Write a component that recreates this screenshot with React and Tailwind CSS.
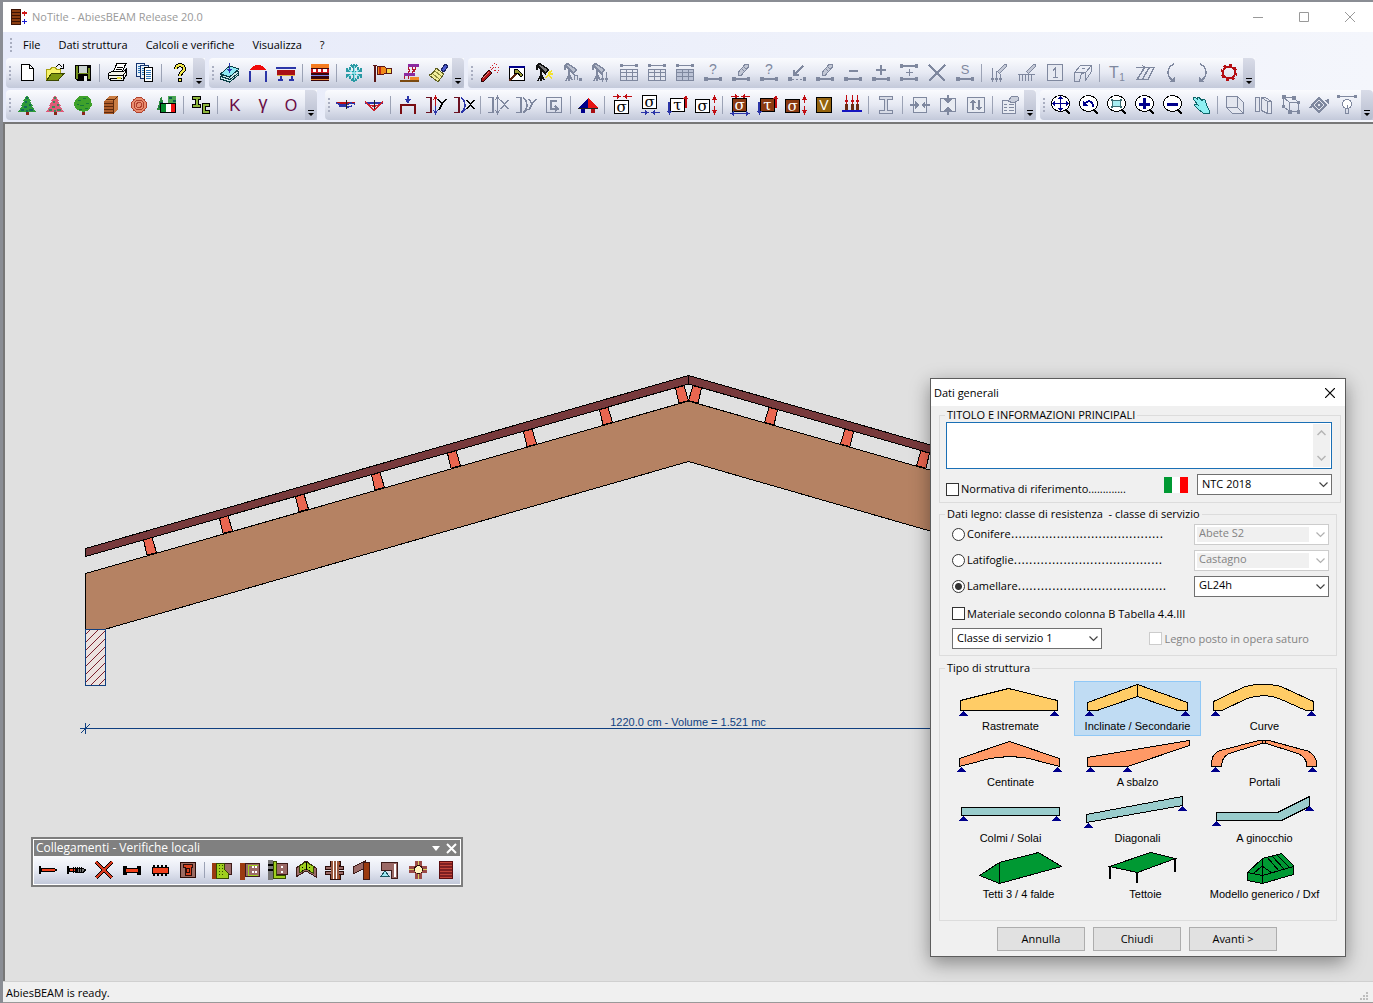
import React from "react";

const G = "#7f889f";
const NAVY = "#00008b";
const BLUE = "#2b35a8";
const RED = "#c00d12";
const UI = "font-['Open_Sans','Noto_Sans',sans-serif]";

const P = ({ d, f = "none", s = "none", w = 1 }) => <path d={d} fill={f} stroke={s} strokeWidth={w} />;
const T = ({ x = 11, y = 16, z = 16, c = G, b = 400, font = "Liberation Sans, sans-serif", children }) => (
  <text x={x} y={y} fontSize={z} fill={c} fontWeight={b} fontFamily={font} textAnchor="middle">{children}</text>
);

const NodeLine = () => (
  <>
    <P d="M2 17h18" s={G} w={2} />
    <P d="M2 15h4v4h-4zM17 15h3v4h-3z" f={G} />
  </>
);
const Pencil = () => (
  <>
    <P d="M8.500 13v-3l7-8h3v3l-7 8z" f="#c3c8d6" s={G} />
    <P d="M12 7l3 3M14 5l3 3" s={G} />
  </>
);
const Spot = ({ c, body }) => (
  <>
    <P d="M3.500 3.500l2-2 9 6-3 4z" f={body} s={c} w={1.500} />
    <P d="M7 8v5M7 12l-3 7M7 12v7M7 12l3 6M3 3v5" s={c} w={1.500} />
  </>
);
const Grid = ({ fill }) => (
  <>
    <P d="M3 3.500h16" s={G} />
    <P d="M2 2h3v3H2zM17 2h3v3h-3z" f={G} />
    <P d="M2.500 7.500h17v11h-17zM2.500 10.500h17M2.500 14.500h17M8.500 7.500v11M14.500 7.500v11" f={fill} s={G} />
  </>
);
const Tree = ({ a, b }) => (
  <>
    <P d="M10 17h3v4h-3z" f="#8a2418" />
    <P d="M11 1l4 6h-1l3 5h-1l4 6H2l4-6H5l3-5H7z" f={a} />
    <P d="M11 3v2M9 8h2M13 11h2M8 13h3M5 16h3M13 16h4M10 17h2" s={b} w={1.500} />
  </>
);
const Sigma = ({ ch, x, y, box = "#fff", ink = "#000" }) => (
  <>
    <rect x={x + 0.5} y={y + 0.5} width="14" height="13" fill={box} stroke="#000" />
    <T x={x + 7.5} y={y + 12} z={15} c={ink} font="DejaVu Serif, serif">{ch}</T>
  </>
);
const InArrows = ({ y, c }) => (
  <g transform={`translate(0 ${y})`}>
    <P d="M2 2.500h5M15 2.500h6" s={c} />
    <P d="M6 0v5l4-2.500zM16 0v5l-4-2.500z" f={c} />
  </g>
);
const OutArrows = ({ y, c }) => (
  <g transform={`translate(0 ${y})`}>
    <P d="M4 2.500h14" s={c} />
    <P d="M5 0v5L1 2.500zM17 0v5l4-2.500z" f={c} />
  </g>
);
const UpDown = ({ x, c }) => (
  <g transform={`translate(${x} 0)`}>
    <P d="M2.500 5v4M2.500 12v5" s={c} />
    <P d="M0 6h5L2.500 1zM0 16h5l-2.500 5z" f={c} />
  </g>
);
const TauArrows = ({ up }) => (
  <>
    <P d="M2 8v10" s={BLUE} w={2} /><P d="M0 17h5l-2.500 4z" f={BLUE} />
    <P d="M19 4v10" s={up} w={2} /><P d="M16 5h5l-2-4z" f={up} />
  </>
);
const Lens = ({ children }) => (
  <>
    <P d="M15 15l5 5" s="#000" w={2.500} />
    <ellipse cx="10.500" cy="9.500" rx="9" ry="8" fill="#fff" stroke="#000" />
    {children}
  </>
);
const Bracket = ({ c, x = 2 }) => <P d={`M${x} 3.500h5v15h-5`} s={c} w={1.500} />;

const ICONS = {
  new: <><P d="M5.500 2.500h8l4 4v12h-12z" f="#fff" s="#000" /><P d="M13.500 2.500v4h4" s="#000" /></>,
  open: <><P d="M2.500 18.500v-11h4l1-2h4l1 2h4v4" f="#f6f36a" s="#a8a010" /><P d="M2.500 18.500l5-7h12.500l-6 7z" f="#7d9710" s="#3b4700" /><P d="M12 5c2-3 4-3 6 0M19.500 2v4h-4" s="#000" /></>,
  save: <><P d="M3 3h16v16H5l-2-2z" f="#000" /><P d="M4 4h2v13H4zM16 6h2v11h-2zM6 11h10v1H6z" f="#6f8c1c" /><P d="M7 4h8v7H7z" f="#c9d3d0" /><P d="M12 14h3v5h-3z" f="#e7eceb" /></>,
  print: <><P d="M7 10l4-8.500h9l-4 8.500z" f="#fff" s="#000" /><P d="M10.500 5.500h6M9.500 7.500h6" s="#000" /><P d="M2.500 11.500l3-2h12l2.500-2v6l-3 5h-12l-2.500-2z" f="#f3f3ea" s="#000" /><P d="M3 13.500h14l3-4M17 13v6M4 16.500h12" s="#000" /><P d="M11 15h4v1.500h-4z" f="#e6dc3c" /></>,
  copy: <><P d="M2.500 1.500h8v13h-8z" f="#e8f2fb" s="#14336f" /><P d="M6.500 3.500h8v13h-8z" f="#e8f2fb" s="#14336f" /><P d="M10.500 5.500h8v14h-8z" f="#fff" s="#000" /><P d="M4 4.500h2M4 6.500h2M4 8.500h2M4 10.500h2M8 6.500h2M8 8.500h2M8 10.500h2M8 12.500h2M12 8.500h5M12 10.500h5M12 12.500h5M12 14.500h5M12 16.500h5" s="#2e75b6" /></>,
  help: <><P d="M8 7c0-5 8-5 8 0 0 3-4 3-4 7" s="#000" w={4} /><P d="M8 7c0-5 8-5 8 0 0 3-4 3-4 7" s="#f2e84b" w={2} /><P d="M10.500 16.500h3v3h-3z" f="#f2e84b" s="#000" /></>,
  book: <><P d="M1.500 15l9-8 9 3v3l-9 7-9-3z" f="#cfe8ea" s="#083c44" /><P d="M1.500 12l9-8 9.500 3-9.500 8z" f="#8fe9f4" s="#083c44" /><P d="M2 14.500l9 3 9-7" s="#083c44" /><P d="M10.500 1v7" s={BLUE} /><P d="M8 7h5l-2.500 4z" f={BLUE} /></>,
  portal: <><P d="M3 9v11M19 9v11" s={BLUE} w={2} /><P d="M2 8l5-4 2-1h4l2 1 5 4z" f="#f00a0a" /></>,
  beam: <><P d="M1 6h20" s={BLUE} w={2} /><P d="M2 8h18v5H2z" f="#a90f16" /><P d="M2 13.500h18" s="#e3b54a" /><P d="M5.500 14v3M16.500 14v3M3 17.500h5M14 17.500h5" s={BLUE} w={2} /></>,
  layers: <><P d="M2 2h18v4H2z" f="#f57b1f" /><P d="M2 6h18v1H2zM2 11h18v8H2z" f="#3a0509" /><P d="M2 7h18v4H2z" f="#c7141c" /><P d="M4 7h3v3H4zM9 7h3v3H9zM14 7h4v3h-4z" f="#fff" /><P d="M2 14l2-1 2 1 2-1 2 1 2-1 2 1 2-1 2 1 2-1" s="#7c84e8" /><P d="M2 17.500h18" s="#f08a28" /></>,
  snow: <><P d="M11 2v18M3 6.500l16 9M3 15.500l16-9M8 3l3 3 3-3M8 19l3-3 3 3M3 9h4V5M19 13h-4v4M3 13h4v4M19 9h-4V5" s="#2a9aa4" w={1.500} /><P d="M11 4v14M5 7.500l12 7M5 14.500l12-7" s="#8fe3ea" /></>,
  wind: <><P d="M4 3v17M2 3.500h4" s="#5a1616" w={1.500} /><P d="M6 4h7l2 2v5l-2 1H6z" f="#ef8a1a" s="#5a1616" /><P d="M15 6h5v5h-5z" f="#f7d84a" s="#5a1616" /><P d="M9 5v7" s="#c2240f" w={2} /></>,
  seismic: <><P d="M9 2h11v3H9zM5 11h11v3H5z" f="#8a2aa0" /><P d="M10 5l-1 2 2 1-2 3M14 5l-1 2 2 1-2 3M6 14l-1 3M10 14l-1 3M17 5l-2 5" s="#b3162e" /><P d="M1 19h19" s="#7b4a10" w={2} /><P d="M11 15h9v3h-9z" f="#f08a28" /></>,
  broom: <><P d="M14 8l4-6 3 2-4 6z" f="#4c5ad0" s="#1a2466" /><P d="M9 6l8 6-6 8-9-7c3 0 5-3 7-7z" f="#f1ee9c" s="#5f5f20" /><P d="M8 9l6 5M6 12l6 5" s="#8f8f40" /></>,
  rocket: <><P d="M3 17l8-9 3 3-8 8h-3z" f="#b3161c" s="#2c0305" /><P d="M5 16l6-6" s="#e88a80" /><P d="M13 8l3-3M14 3h1M18 2h1M20 5h1M17 5h1M20 8h1M19 10h1M16 8h2M12 5h1M16 1h1" s="#d0202a" /></>,
  hammer: <><P d="M3.500 4.500h15v14h-15z" f="#fff" s="#000" /><P d="M3 5h16" s={NAVY} w={2} /><P d="M3 19l8-8" s="#5b2510" w={2} /><P d="M8 8l3-1 6 6-2 2-3-4-3 1z" f="#9a9d38" s="#000" /></>,
  spot: <><Spot c="#111" body="#777" /><P d="M14 11l4-2M14 12h5M14 13l4 3M14 13l-2 3" s="#f2e12e" w={1.500} /></>,
  spotN: <><Spot c={G} body="#b9bfce" /><P d="M12.500 12v6M12 13.500h3v4" s={G} /><P d="M17 16h3v3h-3z" f={G} /></>,
  spotA: <><Spot c={G} body="#b9bfce" /><P d="M12.500 10v8M16.500 10v8M11 16l1.500 3L14 16M15 16l1.500 3 1.500-3" s={G} /></>,
  table1: <Grid fill="none" />,
  table2: <Grid fill="#e3e6ef" />,
  table3: <Grid fill="#bcc3d6" />,
  nodeQ: <><NodeLine /><T y={12} z={14}>?</T></>,
  nodePen: <><NodeLine /><Pencil /></>,
  nodeArrow: <><path d="M2 17.500h18" fill="none" stroke={G} strokeDasharray="2" /><P d="M2 15h4v4h-4zM17 15h3v4h-3z" f={G} /><P d="M17 4l-9 9M8 8v5h5" s={G} w={1.500} /></>,
  nodeMinus: <><NodeLine /><P d="M7 9h9" s={G} w={2} /></>,
  nodePlus: <><NodeLine /><P d="M6 8h10M11 3v10" s={G} w={2} /></>,
  nodeMid: <><P d="M3 4h16M3 17h16" s={G} w={2} /><P d="M8 10.500h7M11.500 7v7" s={G} /><P d="M2 2h3v4H2zM17 2h3v4h-3zM2 15h3v4H2zM17 15h3v4h-3z" f={G} /></>,
  cross: <P d="M3 3l16 16M19 3L3 19" s={G} w={1.500} />,
  nodeS: <><NodeLine /><T y={12} z={13} font="Liberation Sans, sans-serif">S</T></>,
  loadPen: <><P d="M4.500 6v12M8.500 9v9M12.500 12v6M3 16l1.500 3L6 16M7 16l1.500 3L10 16M11 16l1.500 3 1.500-3" s={G} /><P d="M9.500 9.500l7-7h2v2l-7 7z" f="#c3c8d6" s={G} /></>,
  rakePen: <><P d="M2 12.500h17M3.500 12v7M6.500 12v7M9.500 12v7M12.500 12v7M15.500 12v7" s={G} /><P d="M10.500 9.500l7-7h2v2l-7 7z" f="#c3c8d6" s={G} /></>,
  boxOne: <><P d="M3.500 2.500h15v16h-15z" f="#e6e9f1" s={G} w={1.500} /><P d="M9 8.500l2.500-2.500v9M9 15.500h5" s={G} /></>,
  solid: <><P d="M2.500 19.500v-9l6-7h11v6l-6 9v-8l-4 1-2 8z" s={G} /><P d="M2.500 10.500h11l6-7M10 6.500h3" s={G} /></>,
  t1: <><T x={8} y={16} z={16}>T</T><T x={16} y={19} z={10}>1</T></>,
  zz: <><P d="M2 5.500h9M8 3l3 2.500L8 8" s={G} /><P d="M11 5.500h9l-6 12H3l7-11M8 18l7-12" s={G} w={1.500} /></>,
  arcL: <><P d="M12 2c-7 3-8 11-2 16" s={G} w={1.500} /><P d="M13 14v6H8z" f={G} /></>,
  arcR: <><P d="M10 2c7 3 8 11 2 16" s={G} w={1.500} /><P d="M9 14v6h5z" f={G} /></>,
  gear: <><circle cx="11" cy="10.500" r="6" fill="none" stroke="#b50d12" strokeWidth="2" /><circle cx="11" cy="10.500" r="7.500" fill="none" stroke="#b50d12" strokeWidth="2" strokeDasharray="2.900 2.990" /></>,

  fir: <Tree a="#2f9a3a" b="#136a5a" />,
  firRed: <Tree a="#df5a78" b="#3c8a5a" />,
  oak: <><P d="M9.500 15h3v6h-3z" f="#8a2418" /><P d="M7 2h8l4 4 1 5-3 5-6 2-6-2-3-5 1-5z" f="#3fa12b" /><P d="M6 6h3M11 4h3M14 9h3M8 11h4M5 10h2M13 14h3M7 15h3" s="#157a3a" /></>,
  timber: <><P d="M4 7l5-5h9v13l-4 5H4z" f="#c97c42" /><P d="M4 7h9v13H4z" f="#ad5d2c" /><P d="M4 9.500h9M4 12.500h9M4 15.500h9M4 18.500h9M13.500 7v13M13 7l5-5M6 5h9" s="#5f2a0c" /></>,
  log: <><circle cx="11" cy="11" r="7.500" fill="#e98d70" stroke="#b0402c" /><circle cx="11" cy="11" r="5" fill="none" stroke="#b0402c" /><circle cx="11" cy="11" r="2.500" fill="none" stroke="#b0402c" /></>,
  italy: <><P d="M5 2l5 14H1z" f="#2a8a3c" /><P d="M12 2h8v8h-8z" f="#4aa552" /><P d="M13 4h3M17 7h3M4 9h3M3 13h3" s="#0d5f4c" w={2} /><P d="M5 10h5v9H5z" f="#078a2c" /><P d="M10 10h5v9h-5z" f="#fff" /><P d="M15 10h4v9h-4z" f="#f01010" /><P d="M4.500 9.500h15v9h-15z" s="#000" /></>,
  steel: <><P d="M2.500 2.500h8v3h-2.500v5h2.500v3h-8v-3h2.500v-5h-2.500z" f="#8db53c" s="#000" /><P d="M12.500 9.500h7v3h-4v4h4v3h-7z" f="#8db53c" s="#000" /></>,
  K: <T y={17} z={17} c="#6a0d46">K</T>,
  gamma: <T y={15} z={18} c="#6a0d46">γ</T>,
  O: <T y={17} z={16} c="#6a0d46">O</T>,
  wing1: <><P d="M2 9h18" s={RED} w={2} /><P d="M1 9l6 2h4l5-2 4 1M4 12h6l3 1 4-1" s={BLUE} w={1.500} /><P d="M11.500 6v9" s="#222" /></>,
  wing2: <><P d="M2 9h18" s={BLUE} w={1.500} /><P d="M2 8l9 8 9-8M5 11l6 1 6-1" s="#d0202a" w={1.500} /><P d="M11.500 6v9" s="#222" /></>,
  frameDown: <><P d="M4 20v-9h14v9" s="#7a0d12" w={2} /><P d="M11 2v4" s={BLUE} w={2} /><P d="M8 5h6l-3 5z" f={BLUE} /></>,
  brY: <><Bracket c="#6b1020" x={1} /><P d="M10.500 3v9M8.500 6l2-4 2 4" s={RED} /><P d="M10.500 12v7M8.500 16l2 4 2-4" s={BLUE} /><P d="M13 5l4 5 4-5M17 10l-3 6" s="#000" w={1.500} /></>,
  brX: <><Bracket c="#6b1020" x={1} /><P d="M8 4c5 3 5 10 1 14M12 15l-4 4" s={BLUE} w={1.500} /><P d="M14 6l7 9M21 6l-7 9" s="#000" w={1.500} /></>,
  brXg: <><Bracket c={G} x={1} /><P d="M10.500 3v16M8.500 6l2-4 2 4M8.500 16l2 4 2-4" s={G} /><P d="M14 6l7 9M21 6l-7 9" s={G} w={1.500} /></>,
  brYg: <><Bracket c={G} x={1} /><P d="M8 4c5 3 5 10 1 14M12 15l-4 4M14 5l3 5 4-5M17 10l-3 6" s={G} w={1.500} /></>,
  boxG: <><P d="M3.500 3.500h15v15h-15z" s={G} w={1.500} /><P d="M14 7H8v8h6M12 12l3 3-3 2" s={G} w={1.500} /></>,
  tent: <><P d="M11 4L1 14h10z" f={NAVY} /><P d="M11 4l10 10H11z" f="#e51414" /><circle cx="6" cy="17" r="2.500" fill={NAVY} /><circle cx="16" cy="17" r="2.500" fill="#a80d12" /><P d="M1 14h20" s="#222" /></>,
  sig1: <><InArrows y={0} c={RED} /><Sigma ch="σ" x={3} y={6} /></>,
  sig2: <><Sigma ch="σ" x={3} y={1} /><InArrows y={16} c={BLUE} /></>,
  tau1: <><Sigma ch="τ" x={3} y={4} /><TauArrows up={RED} /></>,
  sig3: <><Sigma ch="σ" x={0} y={5} /><UpDown x={17} c={RED} /></>,
  sigB: <><InArrows y={0} c={RED} /><Sigma ch="σ" x={3} y={4} box="#8a3a12" ink="#fff" /><OutArrows y={17} c={BLUE} /></>,
  tauB: <><Sigma ch="τ" x={3} y={4} box="#8a3a12" ink="#fff" /><TauArrows up={RED} /></>,
  sigC: <><Sigma ch="σ" x={0} y={5} box="#8a3a12" ink="#fff" /><UpDown x={17} c={RED} /></>,
  vBox: <><P d="M3.500 3.500h15v15h-15z" f="#94630e" s="#000" /><T y={16} z={14} c="#fff">V</T></>,
  press: <><P d="M5.500 1v7M11.500 1v7M16.500 1v7M4 6l1.500 3L7 6M10 6l1.500 3L13 6M15 6l1.500 3L18 6" s={RED} /><P d="M4 10h3v6H4zM10 10h3v6h-3zM15 10h3v6h-3z" f="#6b2a10" /><P d="M1 17h20" s="#1515c0" w={2} /></>,
  iBeam: <P d="M4.500 2.500h13v3h-5v11h5v3h-13v-3h5v-11h-5z" f="#d7dbe6" s={G} />,
  moveH: <><P d="M4.500 3.500h13v15h-13z" f="#e8ebf2" s={G} /><P d="M1 11h5M16 11h5" s={G} w={2} /><P d="M6 7v8l4-4zM16 7v8l-4-4z" f={G} /></>,
  moveV: <><P d="M3.500 4.500h15v13h-15z" f="#e8ebf2" s={G} /><P d="M11 1v4M11 17v4" s={G} w={2} /><P d="M7 5h8l-4 5zM7 17h8l-4-5z" f={G} /></>,
  moveUD: <><P d="M2.500 3.500h17v15h-17z" f="#e8ebf2" s={G} /><P d="M8 8v8M14 6v8" s={G} w={2} /><P d="M5 9h6L8 5zM11 13h6l-3 4z" f={G} /></>,
  report: <><P d="M3.500 6.500h13v13h-13z" f="#e8ebf2" s={G} w={1.500} /><P d="M5 10.500h3M10 10.500h5M5 13.500h3M10 13.500h5M5 16.500h3M10 16.500h5" s={G} /><P d="M9 7l4-5 6 1 1 3-6 3z" f="#c9cedb" s={G} /></>,
  zFit: <Lens><P d="M3 9.500h15M10.500 3v13" s={NAVY} /><P d="M5 7v5L2 9.500zM16 7v5l3-2.500zM8 5h5l-2.500-3zM8 14h5l-2.500 3z" f={NAVY} /></Lens>,
  zPrev: <Lens><P d="M15 13c0-6-4-7-8-4" s={NAVY} w={2} /><P d="M5 12V6l5 6z" f={NAVY} /></Lens>,
  zWin: <Lens><P d="M6.500 6.500h8v6h-8z" f="#a8eef2" s="#3a6b70" /><P d="M5 5h2v2H5zM14 5h2v2h-2zM5 12h2v2H5zM14 12h2v2h-2z" f="#3a6b70" /></Lens>,
  zIn: <Lens><P d="M5 10h11M10.500 4v11" s={NAVY} w={3} /></Lens>,
  zOut: <Lens><P d="M5 10h11" s={NAVY} w={3} /></Lens>,
  hand: <P d="M3 4l2-1 3 3-1-3 2 0 3 4 1-2 2 1 2 6 2 4v3h-6l-5-4-4-4 1-1 3 1-4-5z" f="#8ff0f2" s="#0c6468" />,
  cube: <P d="M2.500 2.500h11v11h-11zM2.500 2.500h11l6 6v11h-11l-6-6M13.500 13.500l6 6M13.500 2.500v11" f="#e3e6ef" s={G} />,
  panels: <P d="M3.500 3.500h4v14h-4zM9.500 3.500h4l6 4v12h-4l-6-3zM9.500 3.500l6 4v12M15.500 7.500h4" f="#e3e6ef" s={G} />,
  cubePts: <><P d="M3.500 3.500h10l5 5v9h-9l-6-5zM3.500 3.500l6 5h9M9.500 8.500v9" s={G} /><P d="M2 1h4v4H2zM12 2h4v4h-4zM17 7h3v3h-3zM2 11h3v3H2zM8 16h4v4H8zM17 16h3v4h-3z" f={G} /></>,
  rotate: <><P d="M11 4l7 7-7 7-7-7z" f="#e3e6ef" s={G} w={1.500} /><P d="M11 8l3 3-3 3-3-3z" s={G} w={1.500} /><P d="M0 14l4-4v4zM21 5v5l-5-4z" f={G} /></>,
  lamp: <><P d="M1 2.500h20" s={G} /><P d="M1 1h3v3H1zM18 1h3v3h-3z" f={G} /><circle cx="11" cy="10" r="4.500" fill="#fff" stroke={G} /><P d="M9.500 14.500h3v5h-3zM11 11v4" s={G} /></>,

  bolt: <><P d="M2 7h2v8H2z" f="#000" /><P d="M4.500 9.500h13l2 1.500-2 1.500h-13z" f="#f0401c" s="#000" /></>,
  screw: <><P d="M2 7h2v8H2z" f="#000" /><P d="M4.500 9.500h8v3h-8z" f="#f0401c" s="#000" /><P d="M11.500 9.500h7l2 1.500-2 2h-7z" f="#777" s="#000" /><P d="M8.500 8v6M10.500 8v6M12.500 8v6M14.500 8v6M16.500 8v6" s="#000" /></>,
  cross2: <><P d="M3 3l16 16M19 3L3 19" s="#000" w={4} /><P d="M3 3l16 16M19 3L3 19" s="#d83a20" w={1.500} /></>,
  dowel: <><P d="M2 7h4v9H2zM16 7h4v9h-4z" f="#000" /><P d="M4.500 9.500h13v4h-13z" f="#f0401c" s="#000" /></>,
  ring: <><P d="M3.500 8.500h16v6h-16z" f="#f0401c" s="#000" /><P d="M5 6v3M9 6v3M13 6v3M17 6v3M5 14v3M9 14v3M13 14v3M17 14v3" s="#000" w={2} /></>,
  plate: <><P d="M3.500 3.500h15v15h-15z" f="#9c6b62" s="#2a0c08" /><P d="M6.500 5.500h9v3h-1.500v8h-6v-8h-1.500z" f="#d8401c" s="#2a0c08" /><P d="M9.500 9.500h3v4h-3z" s="#2a0c08" /></>,
  conn1: <><P d="M1 4h4v16H1z" f="#9a3a10" /><P d="M5.500 4.500h15v11h-15z" f="#9b6a67" s="#3c1a18" /><P d="M5.500 4.500h8v6l4 4v5h-12z" f="#9fcf1e" s="#354a00" /><path d="M8.500 6v11M11.500 6v11" stroke="#354a00" strokeDasharray="1 2" /></>,
  conn2: <><P d="M1 4h5v17H1z" f="#9a3a10" /><P d="M6.500 4.500h14v13h-14z" f="#9b6a67" s="#3c1a18" /><P d="M19 6h-10v10h10" s="#9fcf1e" /><P d="M13.500 7v2M16.500 7v2M13.500 12v2M16.500 12v2" s="#fff" w={2} /></>,
  conn3: <><P d="M1 1h5v20H1z" f="#777" /><P d="M1 5.500h5M1 10.500h5" s="#000" w={2} /><P d="M9.500 4.500h11v11h-11z" f="#9b6a67" s="#3c1a18" /><P d="M6.500 2.500h3v14h9v3h-12z" f="#9fcf1e" s="#354a00" /><P d="M15 7v2M15 12v2" s="#fff" w={2} /></>,
  conn4: <><P d="M1 9l10-7 10 7v9l-10-6-10 6z" f="#9b6a67" s="#3c1a18" /><P d="M4 7l7-4 7 4v7l-7-4-7 4z" f="#9fcf1e" s="#354a00" /><P d="M11 3v8M7 8h1M14 8h1M7 11h1M14 11h1" s="#000" /></>,
  conn5: <><P d="M7 2h10v4H7zM7 15h10v5H7z" f="#9a3a10" s="#2a0c08" /><P d="M2 7h18v3H2zM2 12h18v3H2z" f="#9b6a67" s="#2a0c08" /><P d="M8 2h8v18H8z" f="#9a5a40" /><P d="M10.500 2v18M13.500 2v18" s="#fff" /></>,
  conn6: <><P d="M2 8l12-6v7L2 15z" f="#9b6a67" s="#3c1a18" /><P d="M12 3h6v17h-6V9z" f="#9a3a10" s="#3c1a18" /></>,
  conn7: <><P d="M2 3.500h16v16h-6V11H2z" f="#9b6a67" s="#3c1a18" /><P d="M16 5v13" s="#fff" w={2} /><P d="M6 12l4 5H2z" f="#9fe9f4" s="#1a5560" /></>,
  conn8: <><P d="M8 2h7v18H8zM2 7h18v7H2z" f="#9b4a47" /><P d="M11.500 2v18M2 10.500h18" s="#d8d060" /><circle cx="11.500" cy="10.500" r="4" fill="#fff6c0" stroke="#2a0c08" /></>,
  lam: <><P d="M4.500 2.500h13v17h-13z" f="#c2453a" s="#5c0c10" /><P d="M5 5h12M5 8h12M5 11h12M5 14h12M5 17h12" s="#7d1f22" w={2} /></>,
};

const BAR = "bg-gradient-to-b from-[#fafbfe] via-[#e6e9f3] to-[#c3c9da]";

function Tool({ id }) {
  return (
    <button type="button" aria-label={id} className="grid w-7 shrink-0 place-items-center hover:bg-sky-100">
      <svg width="22" height="22" viewBox="0 0 22 22" shapeRendering="crispEdges" className="overflow-visible">{ICONS[id]}</svg>
    </button>
  );
}

function Tools({ list }) {
  return list.split(" ").map((id, i) =>
    id === "|" ? <span key={i} className="my-1.5 w-1.5 shrink-0 border-l-2 border-transparent"><span className="block h-full w-px bg-[#9ba2b5]" /></span> : <Tool key={i} id={id} />
  );
}

function Grip() {
  return (
    <span className="flex w-[7px] shrink-0 flex-col items-center justify-center gap-0.5">
      {[0, 1, 2, 3].map((i) => <span key={i} className="h-0.5 w-0.5 bg-[#a9aec0]" />)}
    </span>
  );
}

function ToolBar({ label, list }) {
  return (
    <div role="toolbar" aria-label={label} className={`flex h-[30px] shrink-0 rounded-l ${BAR}`}>
      <Grip />
      <Tools list={list} />
      <button type="button" aria-label={`${label} options`} className="flex w-3 items-end justify-center rounded-r bg-gradient-to-b from-[#d9dce8] to-[#b7bdcf] pb-1">
        <svg width="6" height="6" viewBox="0 0 6 6"><path d="M0 0h6v1H0zM0 3h6L3 6z" fill="#000" /></svg>
      </button>
    </div>
  );
}

function Scene() {
  const left = [0, 1, 2, 3, 4, 5, 6, 7];
  const purlin = (i) => {
    const x = i * 76, y = -i * 21.7;
    return `${143.5 + x},${540 + y} ${152 + x},${537.5 + y} ${156.5 + x},${552.5 + y} ${147 + x},${555 + y}`;
  };
  const half = (
    <>
      <polygon points="85.500,548.500 688.500,375.500 688.500,384 85.500,556.500" fill="#783a3c" stroke="#000" />
      {left.map((i) => <polygon key={i} points={purlin(i)} fill="#ea6650" stroke="#000" />)}
    </>
  );
  return (
    <svg className="block h-full w-full" shapeRendering="crispEdges" aria-label="Beam elevation">
      <defs>
        <pattern id="hatch" width="8" height="8" patternUnits="userSpaceOnUse">
          <rect width="8" height="8" fill="#ebe2e0" />
          <path d="M-1 9L9 -1M-1 1l2-2M7 9l2-2" stroke="#7a1e2c" strokeWidth="1" />
        </pattern>
      </defs>
      <g transform="translate(-5 -124)">
        <polygon points="85.500,573.500 688.500,401 1291.500,573.500 1291.500,629 1271,629 688.500,461.500 106,629 85.500,629" fill="#b58263" stroke="#000" />
        {half}
        <g transform="translate(1377 0) scale(-1 1)">{half}</g>
        <rect x="85.500" y="629.500" width="20" height="56" fill="url(#hatch)" stroke="#0f3f80" />
        <rect x="1271.500" y="629.500" width="20" height="56" fill="url(#hatch)" stroke="#0f3f80" />
        <path d="M80 728.500H1297M85.500 723v11M81 733l9-9" stroke="#0f3f80" fill="none" />
        <text x="688" y="726" fontSize="11" textAnchor="middle" fill="#0f3f80" fontFamily="Liberation Sans, sans-serif">1220.0 cm - Volume = 1.521 mc</text>
      </g>
    </svg>
  );
}

const chevron = (c) => <svg width="9" height="6" viewBox="0 0 9 6" className="pointer-events-none absolute right-1 top-2"><path d="M.5 .5l4 4 4-4" fill="none" stroke={c} strokeWidth="1.200" /></svg>;

function Select({ label, value, disabled, className }) {
  return (
    <span className={`relative block h-[21px] ${className}`}>
      <select aria-label={label} disabled={disabled} defaultValue={value} className={`block h-full w-full appearance-none border bg-white pl-1 pb-0.5 text-[11px] ${disabled ? "border-[#cccccc] text-[#838383] opacity-100 shadow-[inset_0_0_0_2px_white] bg-[linear-gradient(to_right,#f0f0f0_114px,white_114px)]" : "border-[#707070] text-black"}`}>
        <option>{value}</option>
      </select>
      {chevron(disabled ? "#b0b0b0" : "#444")}
    </span>
  );
}

const CHECK = "h-[13px] w-[13px] shrink-0 appearance-none border border-[#333] bg-white disabled:border-[#ccc]";
const RADIO = "h-[13px] w-[13px] shrink-0 appearance-none rounded-full border border-[#333] bg-white checked:bg-[radial-gradient(circle,#333_0_3px,white_4px)]";
const SET = "min-w-0 ml-2 border border-[#dcdcdc]";
const LEGEND = "ml-[5px] px-0.5 leading-[14px]";

const sup = (x, y) => <path key={`${x}${y}`} d={`M${x} ${y}l5 5h-10z`} fill={NAVY} />;
const shape = (pts, f) => <polygon points={pts} fill={f} stroke="#000" />;
const Y = "#ffcc66", O = "#ff9966", C = "#99cccc", GR = "#009933";
const KINDS = [
  ["Rastremate", <>{shape("13.500,19.500 61.500,7.500 110.500,19.500 110.500,29.500 13.500,29.500", Y)}{sup(16, 30)}{sup(107, 30)}</>],
  ["Inclinate / Secondarie", <>{shape("13.500,21.500 63.500,3.500 113.500,21.500 113.500,29.500 104,29.500 63.500,15.500 23,29.500 13.500,29.500", Y)}<path d="M63.500 3v12" stroke="#000" />{sup(15, 30)}{sup(111, 30)}</>],
  ["Curve", <><path d="M12.500 20.500L44 5.500Q62 1 80 5.500L112.500 20.500v9H105L78 17.500Q62 12 46 17.500L21 29.500h-8.500z" fill={Y} stroke="#000" />{sup(14, 30)}{sup(110, 30)}</>],
  ["Centinate", <><path d="M12.500 21.500L62.500 4.500l50 17v8L82 21.500Q62 18 43 21.500L12.500 29.500z" fill={O} stroke="#000" />{sup(14, 30)}{sup(110, 30)}</>],
  ["A sbalzo", <>{shape("13.500,20.500 115.500,3.500 115.500,8.500 53.500,29.500 13.500,29.500", O)}{sup(16, 30)}{sup(53, 30)}</>],
  ["Portali", <><path d="M10.500 29.500v-5Q12 14 23 12.500L58 3.500h10L101 12.500Q113 14 115.500 24.500v5h-10v-4Q103 18 94 15.500L65 6.500h-4L31 15.500Q21 18 20.500 29.500z" fill={O} stroke="#000" /><path d="M61.500 4v3M64.500 4v3" stroke="#000" />{sup(14, 30)}{sup(111, 30)}</>],
  ["Colmi / Solai", <>{shape("14.500,14.500 112.500,14.500 112.500,22.500 14.500,22.500", C)}{sup(16, 23)}{sup(109, 23)}</>],
  ["Diagonali", <>{shape("12.500,21.500 108.500,3.500 108.500,12.500 12.500,29.500", C)}{sup(14, 30)}{sup(108, 13)}</>],
  ["A ginocchio", <>{shape("15.500,19.500 76.500,19.500 108.500,3.500 108.500,13.500 80.500,27.500 15.500,27.500", C)}{sup(15, 28)}{sup(108, 13)}</>],
  ["Tetti 3 / 4 falde", <>{shape("32.500,26.500 52.500,13.500 91.500,3.500 114.500,17.500 52.500,34.500", GR)}<path d="M52.500 13v21" stroke="#000" /></>, true],
  ["Tettoie", <>{shape("35.500,17.500 76.500,3.500 101.500,9.500 63.500,23.500", GR)}<path d="M35 18h2v12h-2zM62 24h2v10h-2zM100 10h2v13h-2z" fill="#000" /></>, true],
  ["Modello generico / Dxf", <>{shape("46.500,23.500 61.500,9.500 80.500,4.500 92.500,16.500 92.500,25.500 61.500,34.500 46.500,31.500", GR)}<path d="M61.500 9.500v25M46.500 23.500l15 3 31-9M52 25l9-8 10 7M66 8l12 14M71 7l12 13M76 6l12 12" stroke="#000" fill="none" /></>],
];

function Dialog() {
  const material = (name, dots, val, checked) => (
    <div className="flex h-[26px] items-center justify-between">
      <label className="flex items-center gap-0.5 whitespace-nowrap">
        <input type="radio" name="wood" defaultChecked={checked} className={RADIO} />
        <span>{name}<span className="font-['DejaVu_Sans',sans-serif] text-[12px] leading-none">{".".repeat(dots)}</span></span>
      </label>
      <Select label={name} value={val} disabled={!checked} className="w-[135px]" />
    </div>
  );
  return (
    <section role="dialog" aria-label="Dati generali" className={`absolute right-[27px] top-[254px] w-[416px] border border-[#5c5c5c] bg-[#f0f0f0] pb-[5px] text-[11px] leading-[14px] text-black shadow-[0_6px_18px_rgba(0,0,0,0.4)] ${UI}`}>
      <header className="flex h-[27px] items-center justify-between bg-white pl-[3px] pr-2.5">
        <h2>Dati generali</h2>
        <button type="button" aria-label="Chiudi finestra"><svg width="10" height="10" viewBox="0 0 10 10"><path d="M0 0l10 10M10 0L0 10" stroke="#000" strokeWidth="1.200" /></svg></button>
      </header>
      <fieldset className={`${SET} mr-1 mt-0.5`}>
        <legend className={LEGEND}>TITOLO E INFORMAZIONI PRINCIPALI</legend>
        <div className="pb-1.5 pl-1.5 pr-2">
          <div className="flex h-[47px] border border-[#1a6fb5] bg-white">
            <textarea aria-label="Titolo e informazioni principali" className="h-full min-w-0 flex-1 resize-none p-1 outline-none" />
            <div className="m-px flex w-[17px] flex-col items-center justify-between bg-[#f0f0f0] py-1.5" aria-hidden="true">
              <svg width="9" height="6" viewBox="0 0 9 6"><path d="M.5 5l4-4 4 4" fill="none" stroke="#b5b5b5" strokeWidth="1.500" /></svg>
              <svg width="9" height="6" viewBox="0 0 9 6"><path d="M.5 1l4 4 4-4" fill="none" stroke="#b5b5b5" strokeWidth="1.500" /></svg>
            </div>
          </div>
          <div className="mt-[5px] flex">
            <label className="mt-2 flex items-center gap-0.5 whitespace-nowrap"><input type="checkbox" className={CHECK} />Normativa di riferimento.............</label>
            <span className="ml-auto mr-[9px] mt-[3px] flex h-4 w-6"><i className="flex-1 bg-[#009933]" /><i className="flex-1 bg-white" /><i className="flex-1 bg-[#ff0000]" /></span>
            <Select label="Normativa" value="NTC 2018" className="w-[135px]" />
          </div>
        </div>
      </fieldset>
      <fieldset className={`${SET} mr-2 mt-1`}>
        <legend className={`${LEGEND} whitespace-pre`}>Dati legno: classe di resistenza  - classe di servizio</legend>
        <div className="pb-1.5 pl-3 pr-[7px]">
          {material("Conifere", 40, "Abete S2", false)}
          {material("Latifoglie", 39, "Castagno", false)}
          {material("Lamellare", 39, "GL24h", true)}
          <label className="flex h-[29px] items-center gap-0.5"><input type="checkbox" className={CHECK} />Materiale secondo colonna B Tabella 4.4.III</label>
          <div className="flex items-center justify-between pr-5">
            <Select label="Classe di servizio" value="Classe di servizio 1" className="w-[150px]" />
            <label className="flex items-center gap-0.5 text-[#838383]"><input type="checkbox" disabled className={CHECK} />Legno posto in opera saturo</label>
          </div>
        </div>
      </fieldset>
      <fieldset className={`${SET} mr-2 mt-[5px]`}>
        <legend className={LEGEND}>Tipo di struttura</legend>
        <div className="grid grid-cols-3 gap-y-px pb-4 pl-[7px] pr-2 pt-1.5 font-['Liberation_Sans',Arial,sans-serif]">
          {KINDS.map(([name, art, inset], i) => (
            <button key={name} type="button" aria-pressed={i === 1} className={`flex h-[55px] flex-col ${i === 1 ? "bg-[#c0dcf3] outline outline-1 -outline-offset-1 outline-[#90c8f6]" : ""}`}>
              <svg height="38" viewBox="0 0 127 38" className="w-[127px] shrink-0 overflow-visible" shapeRendering="crispEdges">{art}</svg>
              <span className={`w-full whitespace-nowrap text-center ${inset ? "pl-4" : ""}`}>{name}</span>
            </button>
          ))}
        </div>
      </fieldset>
      <footer className="mt-1.5 flex justify-center gap-2 pr-0.5">
        {["Annulla", "Chiudi", "Avanti >"].map((t) => (
          <button key={t} type="button" className="h-6 w-[88px] border border-[#adadad] bg-[#e1e1e1]">{t}</button>
        ))}
      </footer>
    </section>
  );
}

function FloatingBar() {
  return (
    <section aria-label="Collegamenti" className={`absolute bottom-[94px] left-[26px] border-2 border-[#7d7d7d] bg-white p-px ${UI}`}>
      <header className="flex h-4 items-center justify-between bg-[#808080] pl-0.5 pr-[3px] text-[12px] leading-4 text-white">
        <span>Collegamenti - Verifiche locali</span>
        <span className="flex items-center gap-1.5">
          <button type="button" aria-label="Opzioni"><svg width="8" height="5" className="block"><path d="M0 0h8L4 5z" fill="#fff" /></svg></button>
          <button type="button" aria-label="Chiudi"><svg width="11" height="11" viewBox="0 0 11 11" className="block"><path d="M1 1l9 9M10 1l-9 9" stroke="#fff" strokeWidth="2" /></svg></button>
        </span>
      </header>
      <div className={`flex h-7 ${BAR}`}>
        <Tools list="bolt screw cross2 dowel ring plate | conn1 conn2 conn3 conn4 conn5 conn6 conn7 conn8 lam" />
      </div>
    </section>
  );
}

export default function App() {
  return (
    <main className={`flex h-screen flex-col overflow-hidden border-l-[3px] border-t-2 border-[#8a8d94] bg-[#f0f0f0] text-black ${UI}`}>
      <header className="flex h-[30px] shrink-0 items-center justify-between bg-white pl-2 pr-[18px]">
        <div className="flex items-center gap-1">
          <svg width="17" height="16" viewBox="0 0 17 16" shapeRendering="crispEdges">
            <path d="M0 0h10v16H0z" fill="#8a3c10" />
            <path d="M0 .5h10M0 3.500h10M0 6.500h10M0 9.500h10M0 12.500h10M0 15.500h10M.5 0v16M9.500 0v16" stroke="#3a1204" />
            <path d="M11 4h5M13.500 1.500v5" stroke="#d01818" strokeWidth="1.500" />
            <path d="M11 12.500h5M13.500 10v5" stroke="#1818d0" strokeWidth="1.500" />
          </svg>
          <h1 className="text-[11px] text-[#999]">NoTitle - AbiesBEAM Release 20.0</h1>
        </div>
        <div className="flex items-center gap-9">
          <button type="button" aria-label="Minimize"><svg width="10" height="10" className="block"><path d="M0 5.500h10" stroke="#999" /></svg></button>
          <button type="button" aria-label="Maximize"><svg width="10" height="10" className="block"><path d="M.5 .5h9v9h-9z" fill="none" stroke="#999" /></svg></button>
          <button type="button" aria-label="Close"><svg width="10" height="10" className="block"><path d="M0 0l10 10M10 0L0 10" stroke="#999" /></svg></button>
        </div>
      </header>
      <div className="shrink-0 bg-gradient-to-r from-[#e6eaf9] to-[#f4f6fc] pb-0.5">
        <nav className="flex h-[26px] items-center pl-1 text-[11px]">
          <Grip />
          {["File", "Dati struttura", "Calcoli e verifiche", "Visualizza", "?"].map((m) => (
            <button key={m} type="button" className="px-[9px]">{m}</button>
          ))}
        </nav>
        <div className="flex gap-1 pl-[3px]">
          <ToolBar label="Standard" list="new open save | print copy | help" />
          <ToolBar label="Carichi" list="book portal beam | layers | snow wind seismic broom" />
          <ToolBar label="Modello" list="rocket hammer spot spotN spotA table1 table2 table3 nodeQ nodePen nodeQ nodeArrow nodePen nodeMinus nodePlus nodeMid cross nodeS | loadPen rakePen boxOne solid | t1 zz arcL arcR gear" />
        </div>
        <div className="mt-0.5 flex gap-1 pl-[3px]">
          <ToolBar label="Materiali" list="fir firRed oak timber log italy | steel | K gamma O" />
          <span />
          <ToolBar label="Risultati" list="wing1 wing2 | frameDown brY brX | brXg brYg boxG | tent | sig1 sig2 tau1 sig3 | sigB tauB sigC vBox press | iBeam | moveH moveV moveUD | report" />
          <ToolBar label="Vista" list="zFit zPrev zWin zIn zOut hand | cube panels cubePts rotate lamp" />
        </div>
      </div>
      <div className="relative min-h-0 flex-1 border-l-2 border-t-2 border-[#777] bg-[#e0e0e0]">
        <Scene />
        <FloatingBar />
        <Dialog />
      </div>
      <footer className="flex h-[22px] shrink-0 items-center justify-between border-b border-t border-b-[#999] border-t-[#d0d0d0] pl-[3px] pr-1 pt-0.5 text-[11px]">
        <span>AbiesBEAM is ready.</span>
        <svg width="9" height="9" className="mt-1.5"><path d="M6 0h2v2H6zM3 3h2v2H3zM6 3h2v2H6zM0 6h2v2H0zM3 6h2v2H3zM6 6h2v2H6z" fill="#bdbdbd" /></svg>
      </footer>
    </main>
  );
}
